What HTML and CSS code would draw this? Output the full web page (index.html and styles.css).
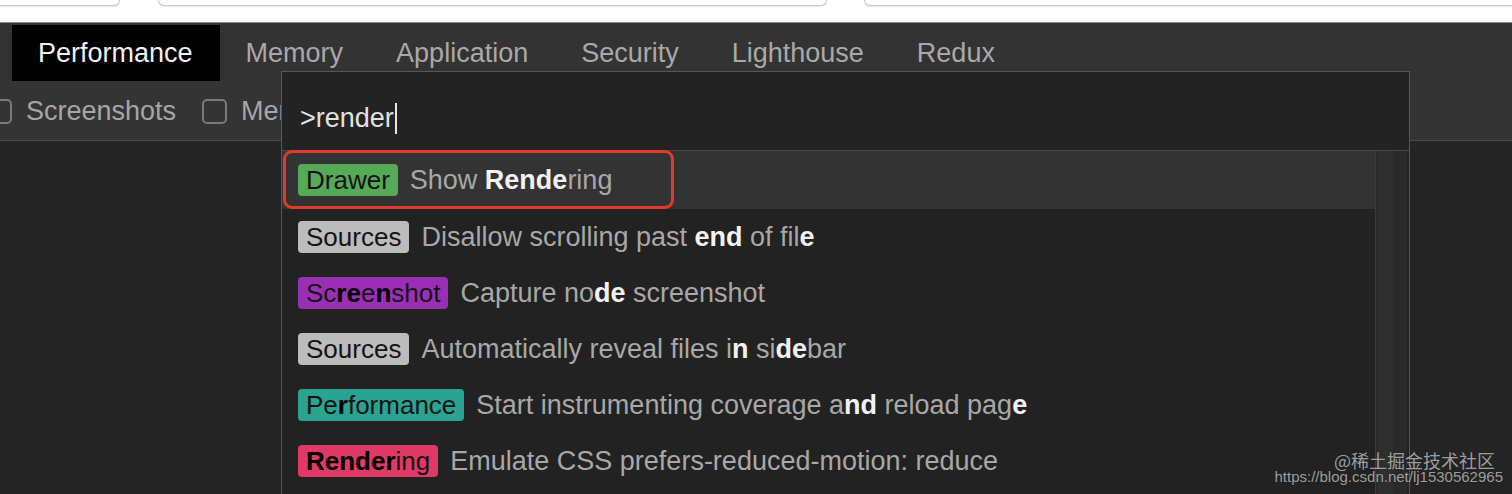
FILE: index.html
```html
<!DOCTYPE html>
<html lang="en">
<head>
<meta charset="utf-8">
<title>DevTools Command Menu</title>
<link rel="stylesheet" href="styles.css">
</head>
<body>
  <div class="chrome">
    <div class="chip chip-a"></div>
    <div class="chip chip-b"></div>
    <div class="chip chip-c"></div>
  </div>
  <div class="tabs">
    <div class="tab active">Performance</div>
    <div class="tab">Memory</div>
    <div class="tab">Application</div>
    <div class="tab">Security</div>
    <div class="tab">Lighthouse</div>
    <div class="tab">Redux</div>
  </div>
  <div class="toolbar">
    <label class="check first"><span class="box"></span>Screenshots</label>
    <label class="check"><span class="box"></span>Memory</label>
  </div>
  <div class="main"></div>

  <div class="palette">
    <div class="prompt">&gt;render<span class="caret"></span></div>
    <div class="results">
      <div class="list">
        <div class="item selected"><span class="badge drawer">Drawer</span><span class="title">Show <b>Rende</b>ring</span></div>
        <div class="item"><span class="badge sources">Sources</span><span class="title">Disallow scrolling past <b>end</b> of fil<b>e</b></span></div>
        <div class="item"><span class="badge screenshot">Sc<b>re</b>e<b>n</b>shot</span><span class="title">Capture no<b>de</b> screenshot</span></div>
        <div class="item"><span class="badge sources">Sources</span><span class="title">Automatically reveal files i<b>n</b> si<b>de</b>bar</span></div>
        <div class="item"><span class="badge performance">Pe<b>r</b>formance</span><span class="title">Start instrumenting coverage a<b>nd</b> reload pag<b>e</b></span></div>
        <div class="item"><span class="badge rendering"><b>Render</b>ing</span><span class="title">Emulate CSS prefers-reduced-motion: reduce</span></div>
      </div>
      <div class="scrollbar"><div class="thumb"></div></div>
    </div>
  </div>

  <div class="highlight"></div>

  <div class="watermark">
    <div class="wm-line1">@稀土掘金技术社区</div>
    <div class="wm-line2">https://blog.csdn.net/lj1530562965</div>
  </div>
</body>
</html>
```
FILE: styles.css
```css
html, body {
  margin: 0;
  padding: 0;
}

body {
  width: 1512px;
  height: 494px;
  overflow: hidden;
  position: relative;
  background: #242424;
  font-family: "Liberation Sans", Arial, Helvetica, sans-serif;
  display: flex;
  flex-direction: column;
}

/* top browser strip */
.chrome {
  height: 22px;
  flex: none;
  background: #ffffff;
  display: flex;
  align-items: flex-start;
}

.chip {
  height: 6px;
  box-sizing: border-box;
  border: 1px solid #c6c6c6;
  border-top: none;
  border-radius: 0 0 9px 9px;
  background: #ffffff;
  box-shadow: 0 1px 1px rgba(0, 0, 0, 0.08);
}

.chip-a {
  margin-left: -14px;
  width: 134px;
}

.chip-b {
  margin-left: 38px;
  width: 669px;
}

.chip-c {
  margin-left: 37px;
  flex: 1;
  margin-right: -20px;
}

/* tab strip */
.tabs {
  height: 60px;
  flex: none;
  box-sizing: border-box;
  border-top: 1px solid #8c8c8c;
  background: #333333;
  display: flex;
  align-items: flex-start;
  padding-left: 12px;
}

.tab {
  height: 56px;
  margin-top: 2px;
  padding: 0 27px 0 26px;
  display: flex;
  align-items: center;
  font-size: 27px;
  color: #a9a9a9;
  white-space: nowrap;
}

.tab.active {
  background: #000000;
  color: #f2f2f2;
}

/* toolbar */
.toolbar {
  height: 59px;
  flex: none;
  box-sizing: border-box;
  background: #343434;
  border-bottom: 1px solid #4a4a4a;
  display: flex;
  align-items: center;
}

.check {
  display: flex;
  align-items: center;
  font-size: 27px;
  color: #a6a6a6;
  margin-right: 26px;
  white-space: nowrap;
}

.check.first {
  margin-left: -13px;
}

.box {
  width: 25px;
  height: 25px;
  box-sizing: border-box;
  border: 2px solid #7a7a7a;
  border-radius: 5px;
  margin-right: 14px;
}

.main {
  flex: 1;
  background: #242424;
}

/* command palette overlay */
.palette {
  position: absolute;
  left: 281px;
  top: 71px;
  width: 1129px;
  height: 440px;
  box-sizing: border-box;
  border: 1px solid #565656;
  background: #232323;
  display: flex;
  flex-direction: column;
}

.prompt {
  height: 78px;
  flex: none;
  box-sizing: border-box;
  padding: 14px 0 0 18px;
  display: flex;
  align-items: center;
  font-size: 27px;
  color: #e2e2e2;
}

.caret {
  display: inline-block;
  width: 2px;
  height: 31px;
  background: #e6e6e6;
  margin-left: 1px;
}

.results {
  flex: 1;
  display: flex;
  border-top: 1px solid #474747;
}

.list {
  flex: 1;
  background: #222222;
}

.item {
  height: 56px;
  display: flex;
  align-items: center;
  padding-left: 16px;
  white-space: nowrap;
}

.item.selected {
  height: 58px;
  background: #333333;
}

.badge {
  height: 32px;
  line-height: 32px;
  padding: 0 8px;
  border-radius: 4px;
  font-size: 26px;
  color: #141414;
  margin-right: 12px;
}

.badge b {
  font-weight: bold;
  color: #000000;
}

.badge.drawer {
  background: #56aa57;
}

.badge.sources {
  background: #bcbcbc;
}

.badge.screenshot {
  background: #9a2fb6;
}

.badge.performance {
  background: #2aa391;
}

.badge.rendering {
  background: #df3966;
}

.title {
  font-size: 27px;
  color: #a8a8a8;
}

.title b {
  color: #f2f2f2;
  font-weight: bold;
}

.scrollbar {
  width: 32px;
  flex: none;
  margin-right: 2px;
  box-sizing: border-box;
  background: #2a2a2a;
  border-left: 1px solid #3b3b3b;
  display: flex;
  justify-content: flex-start;
}

.thumb {
  width: 15px;
  margin-left: 2px;
  height: 100%;
  background: #2f2f2f;
}

/* red annotation frame */
.highlight {
  position: absolute;
  left: 283px;
  top: 150px;
  width: 391px;
  height: 59px;
  box-sizing: border-box;
  border: 3px solid #e23a2b;
  border-radius: 9px;
}

/* watermark */
.watermark {
  position: absolute;
  right: 9px;
  top: 452px;
  display: flex;
  flex-direction: column;
  align-items: flex-end;
  color: rgba(255, 255, 255, 0.6);
  text-shadow: 0 0 1px rgba(0, 0, 0, 0.6);
  white-space: nowrap;
}

.wm-line1 {
  font-family: "Noto Sans CJK SC", "Liberation Sans", sans-serif;
  font-size: 18px;
  line-height: 17px;
  padding-right: 8px;
}

.wm-line2 {
  font-family: "Liberation Sans", Arial, sans-serif;
  font-size: 15px;
  line-height: 15px;
}
```
